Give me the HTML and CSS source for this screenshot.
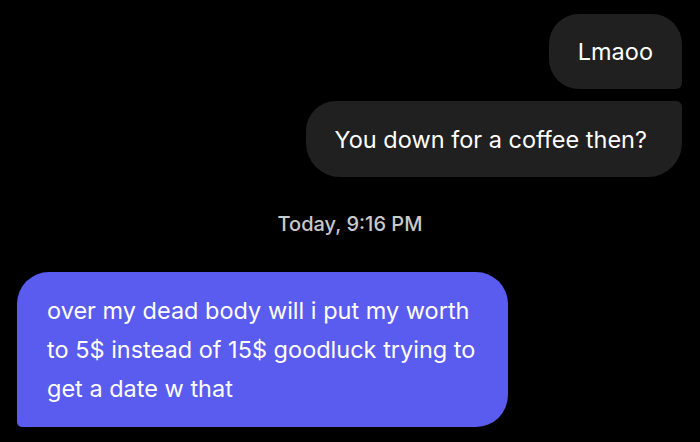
FILE: index.html
```html
<!DOCTYPE html>
<html>
<head>
<meta charset="utf-8">
<link rel="stylesheet" href="styles.css">
</head>
<body>
<div class="chat">
  <div class="row out">
    <div class="bubble grey first">Lmaoo</div>
  </div>
  <div class="row out gap-small">
    <div class="bubble grey last">You down for a coffee then?</div>
  </div>
  <div class="stamp">Today, 9:16 PM</div>
  <div class="row in">
    <div class="bubble purple">over my dead body will i put my worth<br>to 5$ instead of 15$ goodluck trying to<br>get a date w that</div>
  </div>
</div>
</body>
</html>
```
FILE: styles.css
```css
html, body {
  margin: 0;
  padding: 0;
  background: #000;
  width: 700px;
  height: 442px;
  overflow: hidden;
}
.chat {
  display: flex;
  flex-direction: column;
  padding-top: 14px;
  font-family: Inter, "Liberation Sans", sans-serif;
  color: #fff;
}
.row {
  display: flex;
}
.row.out {
  justify-content: flex-end;
  padding-right: 18px;
}
.row.in {
  justify-content: flex-start;
  padding-left: 17px;
}
.gap-small {
  margin-top: 12px;
}
.bubble {
  font-size: 23.5px;
  line-height: 29px;
}
.grey {
  background: #202020;
  padding: 23px 29px;
}
.grey.first {
  border-radius: 30px 30px 6px 30px;
}
.grey.last {
  border-radius: 30px 6px 34px 34px;
  padding-top: 24px;
  padding-left: 29px;
  padding-right: 35px;
}
.stamp {
  margin-top: 35px;
  text-align: center;
  color: #c9c9c9;
  font-size: 20px;
  font-weight: 500;
  line-height: 25px;
}
.purple {
  margin-top: 35px;
  background: #5a5bef;
  border-radius: 32px 32px 32px 5px;
  padding: 19px 33px 19px 30px;
  line-height: 39px;
}
```
